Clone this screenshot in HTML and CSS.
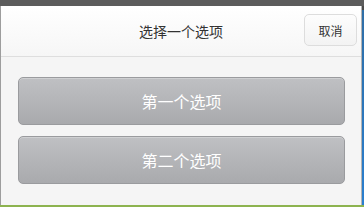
FILE: index.html
```html
<!DOCTYPE html>
<html>
<head>
<meta charset="utf-8">
<title>选择一个选项</title>
<link rel="stylesheet" href="styles.css">
</head>
<body>
	<div class="topbar"></div>
	<div class="frame">
		<div class="sheet">
			<div class="head">
				<h1>选择一个选项</h1>
				<button type="button" class="cancel">取消</button>
			</div>
			<div class="options">
				<button type="button" class="option">第一个选项</button>
				<button type="button" class="option">第二个选项</button>
			</div>
		</div>
		<div class="edge"></div>
	</div>
</body>
</html>
```
FILE: styles.css
```css
html, body {
	margin: 0;
	padding: 0;
	width: 364px;
	height: 208px;
	overflow: hidden;
	background-color: #ffffff;
	font-family: "Noto Sans CJK SC", "Liberation Sans", sans-serif;
}
.topbar {
	height: 6px;
	background-color: #5c5c5c;
}
.frame {
	display: flex;
	height: 199px;
	border-bottom: 2px solid #8db34f;
}
.sheet {
	flex: 1;
	display: flex;
	flex-direction: column;
	background-color: #f5f5f5;
	border-left: 1px solid #9d9d9d;
	border-right: 1px solid #b4b4b4;
}
.edge {
	width: 2px;
	background: linear-gradient(#4a4a4a 0, #4a4a4a 4px, #2f6ea6 4px, #2a7fcf 100%);
}
.head {
	position: relative;
	height: 50px;
	display: flex;
	align-items: center;
	justify-content: center;
	background: linear-gradient(#ffffff, #f6f6f6);
	border-bottom: 1px solid #dedede;
}
h1 {
	margin: 0;
	font-size: 14px;
	font-weight: normal;
	color: #333333;
}
.cancel {
	position: absolute;
	right: 4px;
	top: 8px;
	width: 53px;
	height: 32px;
	padding: 0;
	font-family: inherit;
	font-size: 12px;
	color: #333333;
	background: linear-gradient(#fdfdfd, #f3f3f3);
	border: 1px solid #dddddd;
	border-radius: 5px;
}
.options {
	display: flex;
	flex-direction: column;
	gap: 11px;
	padding: 20px 16px 0 17px;
}
.option {
	height: 48px;
	padding: 0;
	font-family: inherit;
	font-size: 16px;
	color: #ffffff;
	background: linear-gradient(#bfc0c3, #a9aaad);
	border: 1px solid #9a9b9e;
	border-radius: 5px;
	box-shadow: inset 0 1px 0 rgba(255, 255, 255, 0.25);
}
```
